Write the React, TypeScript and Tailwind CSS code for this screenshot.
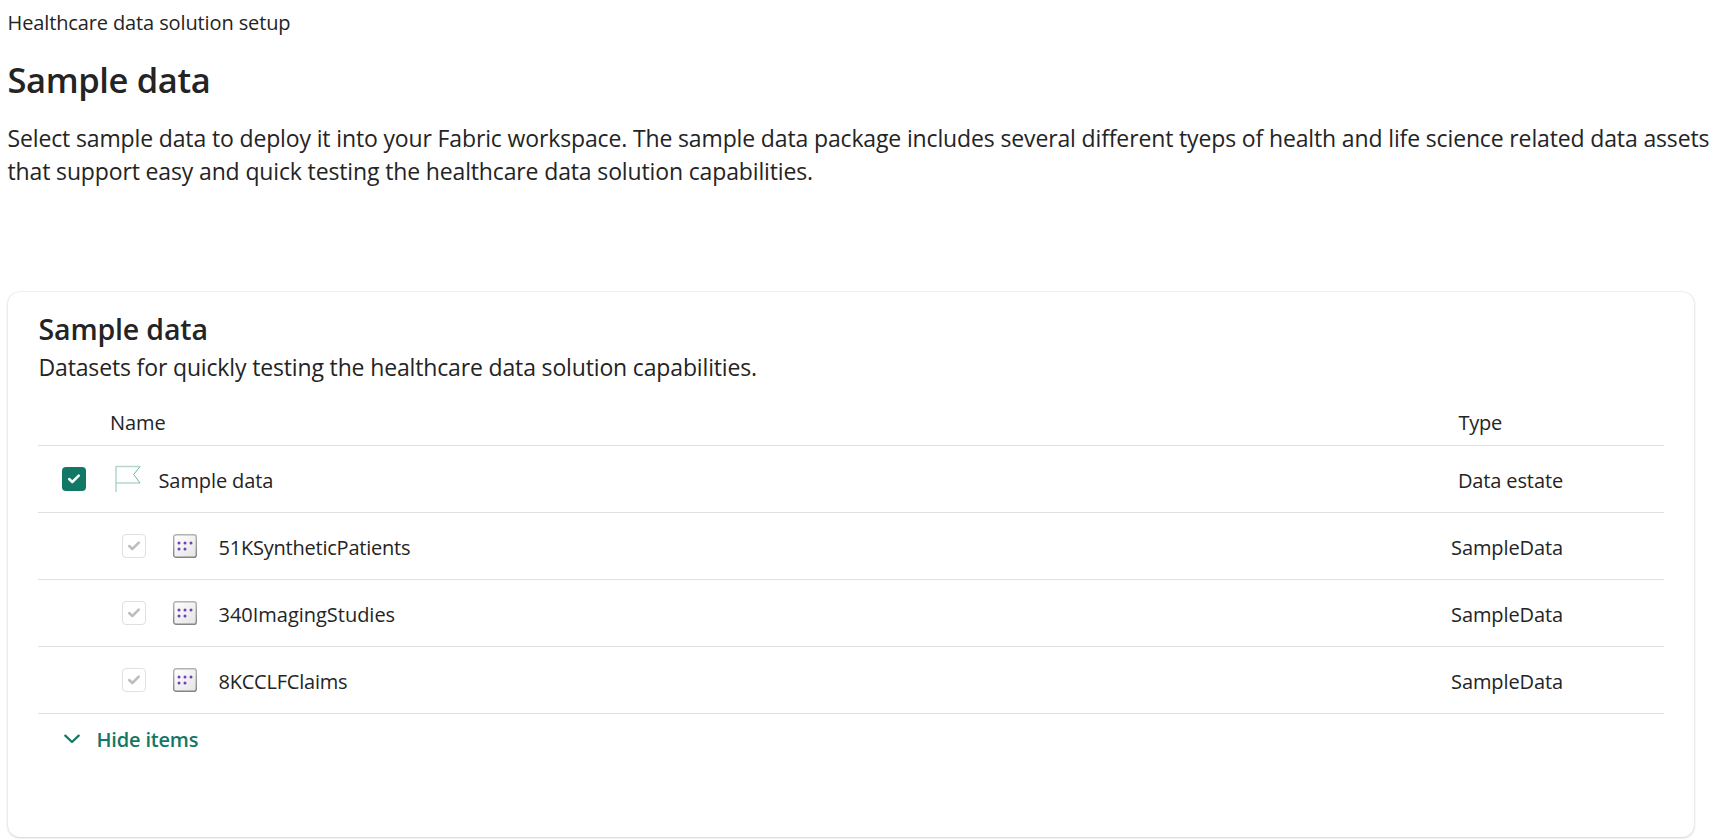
import { useState } from "react";

interface DataItem {
  id: string;
  name: string;
  type: string;
  tracking: string;
}

const items: DataItem[] = [
  { id: "patients", name: "51KSyntheticPatients", type: "SampleData", tracking: "tracking-[-0.22px]" },
  { id: "imaging", name: "340ImagingStudies", type: "SampleData", tracking: "tracking-[-0.02px]" },
  { id: "claims", name: "8KCCLFClaims", type: "SampleData", tracking: "tracking-[-0.22px]" },
];

function CheckMark({ className }: { className: string }) {
  return (
    <svg viewBox="0 0 24 24" className={className} fill="none" strokeWidth="2.5" strokeLinecap="round" strokeLinejoin="round">
      <path d="M7.2 12 L10.3 15 L16.8 8.6" />
    </svg>
  );
}

function FlagIcon() {
  return (
    <svg width="26" height="28" viewBox="0 0 26 28" fill="none" className="shrink-0">
      <path d="M1 1v26" stroke="#b5d8d0" strokeWidth="1.6" />
      <path d="M1 1.5h24M1 18h24" stroke="#b5d8d0" strokeWidth="1.5" />
      <path d="M25 1.5 L18.7 9.5 L25 18" stroke="#6fb3a5" strokeWidth="1" />
    </svg>
  );
}

function DatasetIcon() {
  return (
    <svg width="24" height="24" viewBox="0 0 24 24" className="shrink-0">
      <defs>
        <linearGradient id="tile" x1="0" y1="0" x2="1" y2="1">
          <stop offset="0" stopColor="#ffffff" />
          <stop offset="1" stopColor="#e4e4e4" />
        </linearGradient>
        <linearGradient id="edge" x1="0" y1="0" x2="0" y2="1">
          <stop offset="0" stopColor="#b3b3b3" />
          <stop offset="1" stopColor="#858585" />
        </linearGradient>
      </defs>
      <rect x="0.7" y="0.7" width="22.6" height="22.6" rx="2.4" fill="url(#tile)" stroke="url(#edge)" strokeWidth="1.4" />
      <g fill="#6b42b5">
        <circle cx="6" cy="9" r="1.5" />
        <circle cx="12" cy="9" r="1.5" />
        <circle cx="18" cy="9" r="1.5" />
        <circle cx="6" cy="15" r="1.5" />
        <circle cx="12" cy="15" r="1.5" />
      </g>
    </svg>
  );
}

export default function App() {
  const [isOpen, setIsOpen] = useState(true);

  return (
    <div className="min-h-screen bg-white pt-2 font-['Open_Sans','Noto_Sans',sans-serif] text-[20px] leading-[30px] whitespace-nowrap text-[#242424]">
      <header className="pl-[7.5px]">
        <p className="tracking-[-0.12px]">Healthcare data solution setup</p>
        <h1 className="mt-[18px] text-[34.5px] leading-[48px] font-semibold tracking-[-0.38px]">Sample data</h1>
        <p className="mt-[18px] text-[23px] leading-[33px] tracking-[-0.14px]">
          Select sample data to deploy it into your Fabric workspace. The sample data package includes several different tyeps of health and life science related data assets
          <br />
          that support easy and quick testing the healthcare data solution capabilities.
        </p>
      </header>

      <section className="mt-[104px] ml-2 h-[545px] w-[1686px] rounded-xl bg-white px-[30px] pt-[17px] shadow-[0_0_2px_rgba(0,0,0,0.14),0_1px_3px_rgba(0,0,0,0.14)]">
        <h2 className="pl-[0.5px] text-[28.5px] leading-[40px] font-semibold tracking-[-0.15px]">Sample data</h2>
        <p className="mt-0.5 pl-[0.5px] text-[23px] leading-[33px] tracking-[-0.15px]">
          Datasets for quickly testing the healthcare data solution capabilities.
        </p>

        <div className="flex h-[62px] justify-between border-b border-[#e0e0e0] pt-6 pr-[162px] pl-[72px]">
          <span className="tracking-[-0.1px]">Name</span>
          <span className="tracking-[-0.25px]">Type</span>
        </div>

        <div className="flex h-[67px] items-center border-b border-[#e0e0e0] pr-[101px] pl-6">
          <span className="flex size-6 shrink-0 rounded bg-[#117865]">
            <CheckMark className="size-6 stroke-white" />
          </span>
          <span className="ml-[29px] flex">
            <FlagIcon />
          </span>
          <span className="mt-1 ml-[17.5px] flex-1 tracking-[-0.1px]">Sample data</span>
          <span className="mt-1 tracking-[-0.12px]">Data estate</span>
        </div>

        {isOpen &&
          items.map((item) => (
            <div key={item.id} className="flex h-[67px] items-center border-b border-[#e0e0e0] pr-[101px] pl-[84px]">
              <span className="flex size-6 shrink-0 rounded border border-[#e0e0e0]">
                <CheckMark className="-m-px size-6 shrink-0 stroke-[#bdbdbd]" />
              </span>
              <span className="ml-[27px] flex">
                <DatasetIcon />
              </span>
              <span className={`mt-1 ml-[21.5px] flex-1 ${item.tracking}`}>{item.name}</span>
              <span className="mt-1 tracking-[-0.1px]">{item.type}</span>
            </div>
          ))}

        <button
          type="button"
          onClick={() => setIsOpen(!isOpen)}
          className="mt-[11px] flex items-center pl-[26px] font-semibold tracking-[-0.18px] text-[#117865]"
        >
          <svg width="16" height="10" viewBox="0 0 16 10" fill="none" className="mr-[16.5px] -mt-0.5" stroke="currentColor" strokeWidth="2.2" strokeLinecap="round" strokeLinejoin="round">
            <path d="M1.3 1.6 L8 8 L14.7 1.6" />
          </svg>
          {isOpen ? "Hide items" : "Show items"}
        </button>
      </section>
    </div>
  );
}
